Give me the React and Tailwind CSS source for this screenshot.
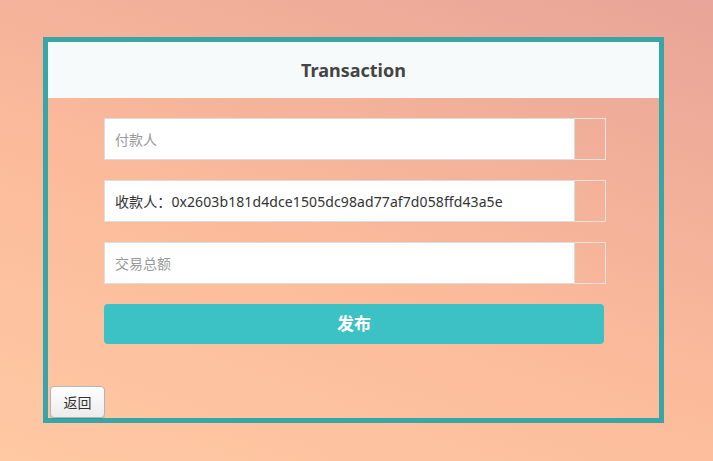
import React from "react";

function Field({ placeholder, value }) {
  return (
    <div className="flex h-[42px] w-[502px]">
      <div className="flex h-full w-[471px] items-center border border-[#dcdcdc] bg-white pl-[10px]">
        {value ? (
          <span className="text-[14px] tracking-[0.1px] text-[#333]">{value}</span>
        ) : (
          <span className="text-[14px] text-[#999]">{placeholder}</span>
        )}
      </div>
      <div className="h-full w-[31px] border border-l-0 border-[#e6e2e0]" />
    </div>
  );
}

export default function App() {
  return (
    <div
      className="h-[461px] w-[713px] overflow-hidden bg-[linear-gradient(20deg,#ffc9a4_0%,#fbbb9b_45%,#e8a498_100%)] pt-[37px] pl-[43px]"
      style={{ fontFamily: '"Noto Sans", "Noto Sans CJK SC", sans-serif' }}
    >
      <div className="flex h-[386px] w-[621px] flex-col border-[5px] border-[#38a6a6]">
        <div className="flex h-[56px] items-center justify-center bg-[#f6fafb]">
          <span className="text-[18px] font-bold text-[#444]">Transaction</span>
        </div>
        <div className="flex flex-1 flex-col">
          <div className="flex flex-col gap-[20px] pt-[20px] pl-[56px]">
            <Field placeholder="付款人" />
            <Field value="收款人：0x2603b181d4dce1505dc98ad77af7d058ffd43a5e" />
            <Field placeholder="交易总额" />
            <div className="flex h-[40px] w-[500px] items-center justify-center rounded-[4px] bg-[#3cc1c4]">
              <span className="text-[17px] font-bold text-white">发布</span>
            </div>
          </div>
          <div className="flex-1" />
          <div className="pl-[2px]">
            <div className="flex h-[32px] w-[55px] items-center justify-center rounded-[4px] border border-[#b5b5b5] bg-[linear-gradient(to_bottom,#ffffff,#ececec)] text-[14px] text-[#333] shadow-[0_1px_1px_rgba(0,0,0,0.1)]">
              返回
            </div>
          </div>
        </div>
      </div>
    </div>
  );
}
